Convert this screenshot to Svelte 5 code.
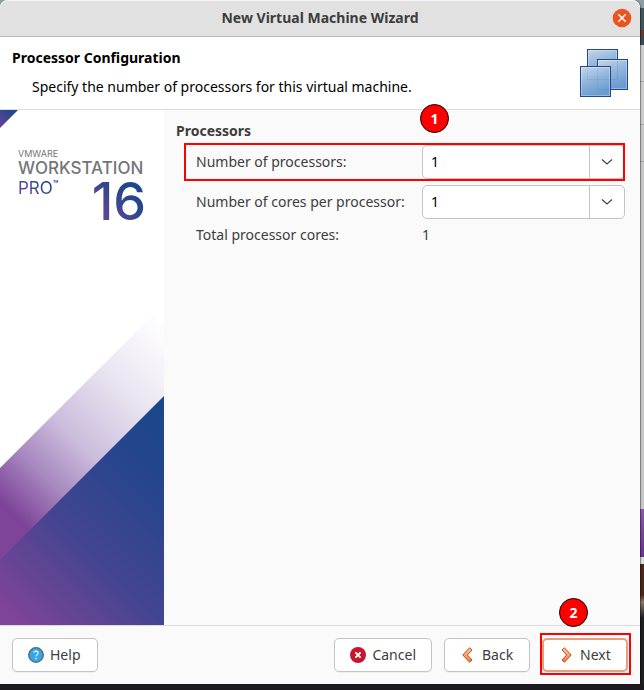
<script>
  let processors = $state('1');
  let cores = $state('1');
  const counts = ['1', '2', '4', '8'];
  const total = $derived(Number(processors) * Number(cores));
</script>

{#snippet chevron()}
  <span class="arrow">
    <svg width="12" height="8" viewBox="0 0 12 8" aria-hidden="true">
      <path d="M1 1.5 L6 6 L11 1.5" fill="none" stroke="#444" stroke-width="1.2" />
    </svg>
  </span>
{/snippet}

<div class="desktop">
  <div class="window">
    <header class="titlebar">
      <h1>New Virtual Machine Wizard</h1>
      <button class="close" aria-label="Close">
        <svg width="20" height="20" viewBox="0 0 20 20" aria-hidden="true">
          <circle cx="10" cy="10" r="9.3" fill="#e95420" />
          <path d="M6.3 6.3 L13.7 13.7 M13.7 6.3 L6.3 13.7" stroke="#fff" stroke-width="1.5" />
        </svg>
      </button>
    </header>

    <section class="heading">
      <div>
        <h2>Processor Configuration</h2>
        <p>Specify the number of processors for this virtual machine.</p>
      </div>
      <svg width="48" height="48" viewBox="0 0 48 48" aria-hidden="true">
        <defs>
          <linearGradient id="pane" x1="0" y1="0" x2="0.35" y2="1">
            <stop offset="0" stop-color="#c9d8e8" />
            <stop offset="0.5" stop-color="#92b6dc" />
            <stop offset="1" stop-color="#6b9bd0" />
          </linearGradient>
        </defs>
        <g fill="url(#pane)" stroke="#1f478a">
          <rect x="7.5" y="0.5" width="30" height="30" />
          <rect x="17.5" y="10.5" width="30" height="30" />
          <path d="M18 30.5 H37.5 V11" fill="none" stroke-opacity="0.12" />
          <rect x="0.5" y="17.5" width="30" height="30" />
          <path d="M7.5 18 V30.5 H30 M17.5 18 V40.5 H30" fill="none" stroke-opacity="0.08" />
        </g>
        <g fill="none" stroke="#fff" stroke-opacity="0.3">
          <path d="M8.5 17 V1.5 H36.5 V10" />
          <path d="M18.5 17 V11.5 H46.5 V39.5 H31" />
          <rect x="1.5" y="18.5" width="28" height="28" />
        </g>
      </svg>
    </section>

    <div class="body">
      <aside>
        <svg class="corner" width="18" height="18" viewBox="0 0 18 18" aria-hidden="true">
          <defs>
            <linearGradient id="tip" x1="0" y1="1" x2="0.8" y2="0.2">
              <stop offset="0" stop-color="#6a4496" />
              <stop offset="1" stop-color="#1f478c" />
            </linearGradient>
          </defs>
          <path d="M0 0 H18 L0 18 Z" fill="url(#tip)" />
        </svg>
        <svg class="art" viewBox="0 0 164 322" aria-hidden="true">
          <defs>
            <linearGradient id="band" gradientUnits="userSpaceOnUse" x1="0" y1="197" x2="171" y2="26">
              <stop offset="0" stop-color="#7e4499" />
              <stop offset="0.2" stop-color="#a788bf" />
              <stop offset="0.4" stop-color="#cbbddd" />
              <stop offset="0.7" stop-color="#ebe6f2" />
              <stop offset="1" stop-color="#fff" />
            </linearGradient>
            <linearGradient id="deep" gradientUnits="userSpaceOnUse" x1="0" y1="300" x2="185" y2="115">
              <stop offset="0" stop-color="#7e4499" />
              <stop offset="0.38" stop-color="#444590" />
              <stop offset="0.7" stop-color="#28458d" />
              <stop offset="1" stop-color="#17478a" />
            </linearGradient>
          </defs>
          <path d="M0 165 L164 1 V100 L0 264 Z" fill="url(#band)" />
          <path d="M0 257 L164 93 V322 H0 Z" fill="url(#deep)" />
        </svg>
        <div class="brand">
          <span class="maker">VMWARE</span>
          <span class="product">WORKSTATION</span>
          <div class="edition">
            <span class="pro">PRO<sup>™</sup></span>
            <span class="version">16</span>
          </div>
        </div>
      </aside>

      <main>
        <h3>Processors</h3>
        <div class="row">
          <label for="processors">Number of processors:</label>
          <div class="combo">
            <select id="processors" bind:value={processors}>
              {#each counts as n}<option>{n}</option>{/each}
            </select>
            {@render chevron()}
          </div>
          <div class="mark"></div>
          <div class="badge">1</div>
        </div>
        <div class="row">
          <label for="cores">Number of cores per processor:</label>
          <div class="combo">
            <select id="cores" bind:value={cores}>
              {#each counts as n}<option>{n}</option>{/each}
            </select>
            {@render chevron()}
          </div>
        </div>
        <div class="row">
          <span>Total processor cores:</span>
          <output for="processors cores">{total}</output>
        </div>
      </main>
    </div>

    <footer>
      <button class="action help">
        <svg width="16" height="16" viewBox="0 0 16 16" aria-hidden="true">
          <circle cx="8" cy="8" r="7.3" fill="#35a5e5" stroke="#596873" stroke-width="1.3" />
          <path d="M5.8 5.7 C6 3.5 10.2 3.6 10.1 6 C10 7.6 8 7.6 8 9.6" fill="none" stroke="#fff" stroke-width="1.1" />
          <circle cx="8" cy="11.6" r="0.8" fill="#fff" />
        </svg>
        Help
      </button>
      <button class="action">
        <svg width="16" height="16" viewBox="0 0 16 16" aria-hidden="true">
          <circle cx="8" cy="8" r="8" fill="#c7162b" />
          <path d="M5.4 5.4 L10.6 10.6 M10.6 5.4 L5.4 10.6" stroke="#fff" stroke-width="1.9" />
        </svg>
        Cancel
      </button>
      <button class="action">
        <svg width="16" height="16" viewBox="0 0 16 16" aria-hidden="true">
          <defs>
            <linearGradient id="amber" x1="0" y1="0" x2="0" y2="1">
              <stop offset="0" stop-color="#fbd0a0" />
              <stop offset="1" stop-color="#ea8048" />
            </linearGradient>
          </defs>
          <path d="M9.6 0.8 L12 3 L7.3 8 L12 13 L9.6 15.2 L2.8 8 Z" fill="url(#amber)" stroke="#c24414" stroke-linejoin="round" />
        </svg>
        Back
      </button>
      <div class="primary">
        <button class="action next">
          <svg width="16" height="16" viewBox="0 0 16 16" aria-hidden="true">
            <path d="M6.4 0.8 L4 3 L8.7 8 L4 13 L6.4 15.2 L13.2 8 Z" fill="url(#amber)" stroke="#c24414" stroke-linejoin="round" />
          </svg>
          Next
        </button>
        <div class="mark"></div>
        <div class="badge">2</div>
      </div>
    </footer>
  </div>
</div>

<style>
  :global(body) {
    margin: 0;
  }
  .desktop {
    box-sizing: border-box;
    min-height: 100vh;
    display: flex;
    padding: 0 4px 6px 0;
    font: 14px/20px 'Noto Sans', sans-serif;
    color: #3d3d3d;
    background:
      linear-gradient(#1c1a20, #1c1a20) bottom / 100% 6px no-repeat,
      linear-gradient(
        #8d9da1 0 8px, #46555a 8px 30px, #5d3b36 30px 36px, #3c4a50 36px 45px,
        #cecece 45px 81px, #a5a5a5 81px 82px, #cecece 82px 124px, #a5a5a5 124px 125px,
        #c8c8c8 125px 161px, #a5a5a5 161px 162px, #c8c8c8 162px 509px,
        #8a5aa8 509px, #65348c 557px, #dcdcdc 557px 564px,
        #4b281f 564px 595px, #87786d 602px, #1f1e23 618px
      );
  }
  .window {
    flex: 1;
    min-width: 0;
    display: flex;
    flex-direction: column;
    background: #fafafa;
    border-radius: 8px 8px 0 0;
    box-shadow: 1px 0 1px #00000066;
  }
  h1, h2, h3, p {
    margin: 0;
    font-size: 14px;
  }
  .titlebar {
    display: grid;
    grid-template-columns: 28px 1fr 28px;
    align-items: center;
    height: 36px;
    padding: 0 4px;
    background: #e1e1e1;
    border-bottom: 1px solid #bababa;
    border-radius: 8px 8px 0 0;
    box-shadow: inset 0 1px #f4f4f4;
  }
  h1 {
    grid-column: 2;
    text-align: center;
  }
  .close {
    display: flex;
    justify-content: center;
    padding: 0;
    border: 0;
    background: none;
  }
  .heading {
    display: flex;
    justify-content: space-between;
    align-items: center;
    padding: 11px 12px 12px;
    background: #fff;
    border-bottom: 1px solid #dcdcdc;
    color: #000;
  }
  .heading p {
    margin-top: 9px;
    padding-left: 20px;
  }
  .body {
    flex: 1;
    display: flex;
    border-bottom: 1px solid #dcdcdc;
  }
  aside {
    position: relative;
    flex: none;
    width: 164px;
    background: #fff;
  }
  .corner {
    position: absolute;
    top: 0;
    left: 0;
  }
  .art {
    position: absolute;
    bottom: 0;
    left: 0;
    width: 100%;
  }
  .brand {
    position: relative;
    display: flex;
    flex-direction: column;
    padding: 38px 18px 0;
    font-family: Inter, sans-serif;
    color: #747678;
  }
  .maker {
    font-size: 9px;
    line-height: 12px;
  }
  .product {
    font-size: 17px;
    line-height: 16px;
    font-weight: 500;
  }
  .edition {
    display: flex;
    justify-content: space-between;
  }
  .pro, .version {
    color: transparent;
    background: linear-gradient(45deg, #7e4499, #1f478c 70%);
    background-clip: text;
    -webkit-background-clip: text;
  }
  .pro {
    align-self: flex-start;
    font-size: 17px;
    line-height: 24px;
  }
  sup {
    font-size: 9px;
    line-height: 0;
    font-weight: 700;
  }
  .version {
    font-size: 52px;
    line-height: 52px;
    font-weight: 500;
  }
  main {
    flex: 1;
    display: flex;
    flex-direction: column;
    gap: 6px;
    padding: 11px 15px 12px 12px;
  }
  h3 {
    margin-bottom: -2px;
  }
  .row {
    position: relative;
    display: grid;
    grid-template-columns: 226px 1fr;
    align-items: center;
    padding-left: 20px;
  }
  .combo {
    position: relative;
    display: flex;
  }
  select {
    flex: 1;
    height: 34px;
    appearance: none;
    padding: 0 44px 0 8px;
    border: 1px solid #c4c4c4;
    border-radius: 5px;
    background: #fff;
    color: #000;
    font: inherit;
  }
  .arrow {
    position: absolute;
    inset: 1px 1px 1px auto;
    width: 34px;
    display: flex;
    align-items: center;
    justify-content: center;
    border-left: 1px solid #c4c4c4;
    pointer-events: none;
  }
  .mark {
    position: absolute;
    border: 2px solid #f00;
    pointer-events: none;
  }
  .row .mark {
    inset: -2px 0 -2px 8px;
  }
  .badge {
    position: absolute;
    box-sizing: border-box;
    width: 29px;
    height: 29px;
    border: 1px solid #1a0000;
    border-radius: 50%;
    background: #f00;
    color: #fff;
    font-weight: 700;
    line-height: 27px;
    text-align: center;
  }
  .row .badge {
    top: -41px;
    left: 244px;
  }
  footer {
    display: flex;
    gap: 12px;
    padding: 12px;
  }
  .action {
    display: flex;
    align-items: center;
    gap: 6px;
    height: 34px;
    min-width: 86px;
    padding: 0 15px;
    border: 1px solid #c4c4c4;
    border-radius: 5px;
    background: #fff;
    box-shadow: 0 1px 1px #0000000d;
    color: #3d3d3d;
    font: inherit;
  }
  .help {
    margin-right: auto;
  }
  .primary {
    position: relative;
  }
  .next {
    padding: 0 14px;
    border: 2px solid #eb9d80;
  }
  .primary .mark {
    inset: -5px -3px -3px -2px;
  }
  .primary .badge {
    top: -40px;
    left: 17px;
  }
</style>
